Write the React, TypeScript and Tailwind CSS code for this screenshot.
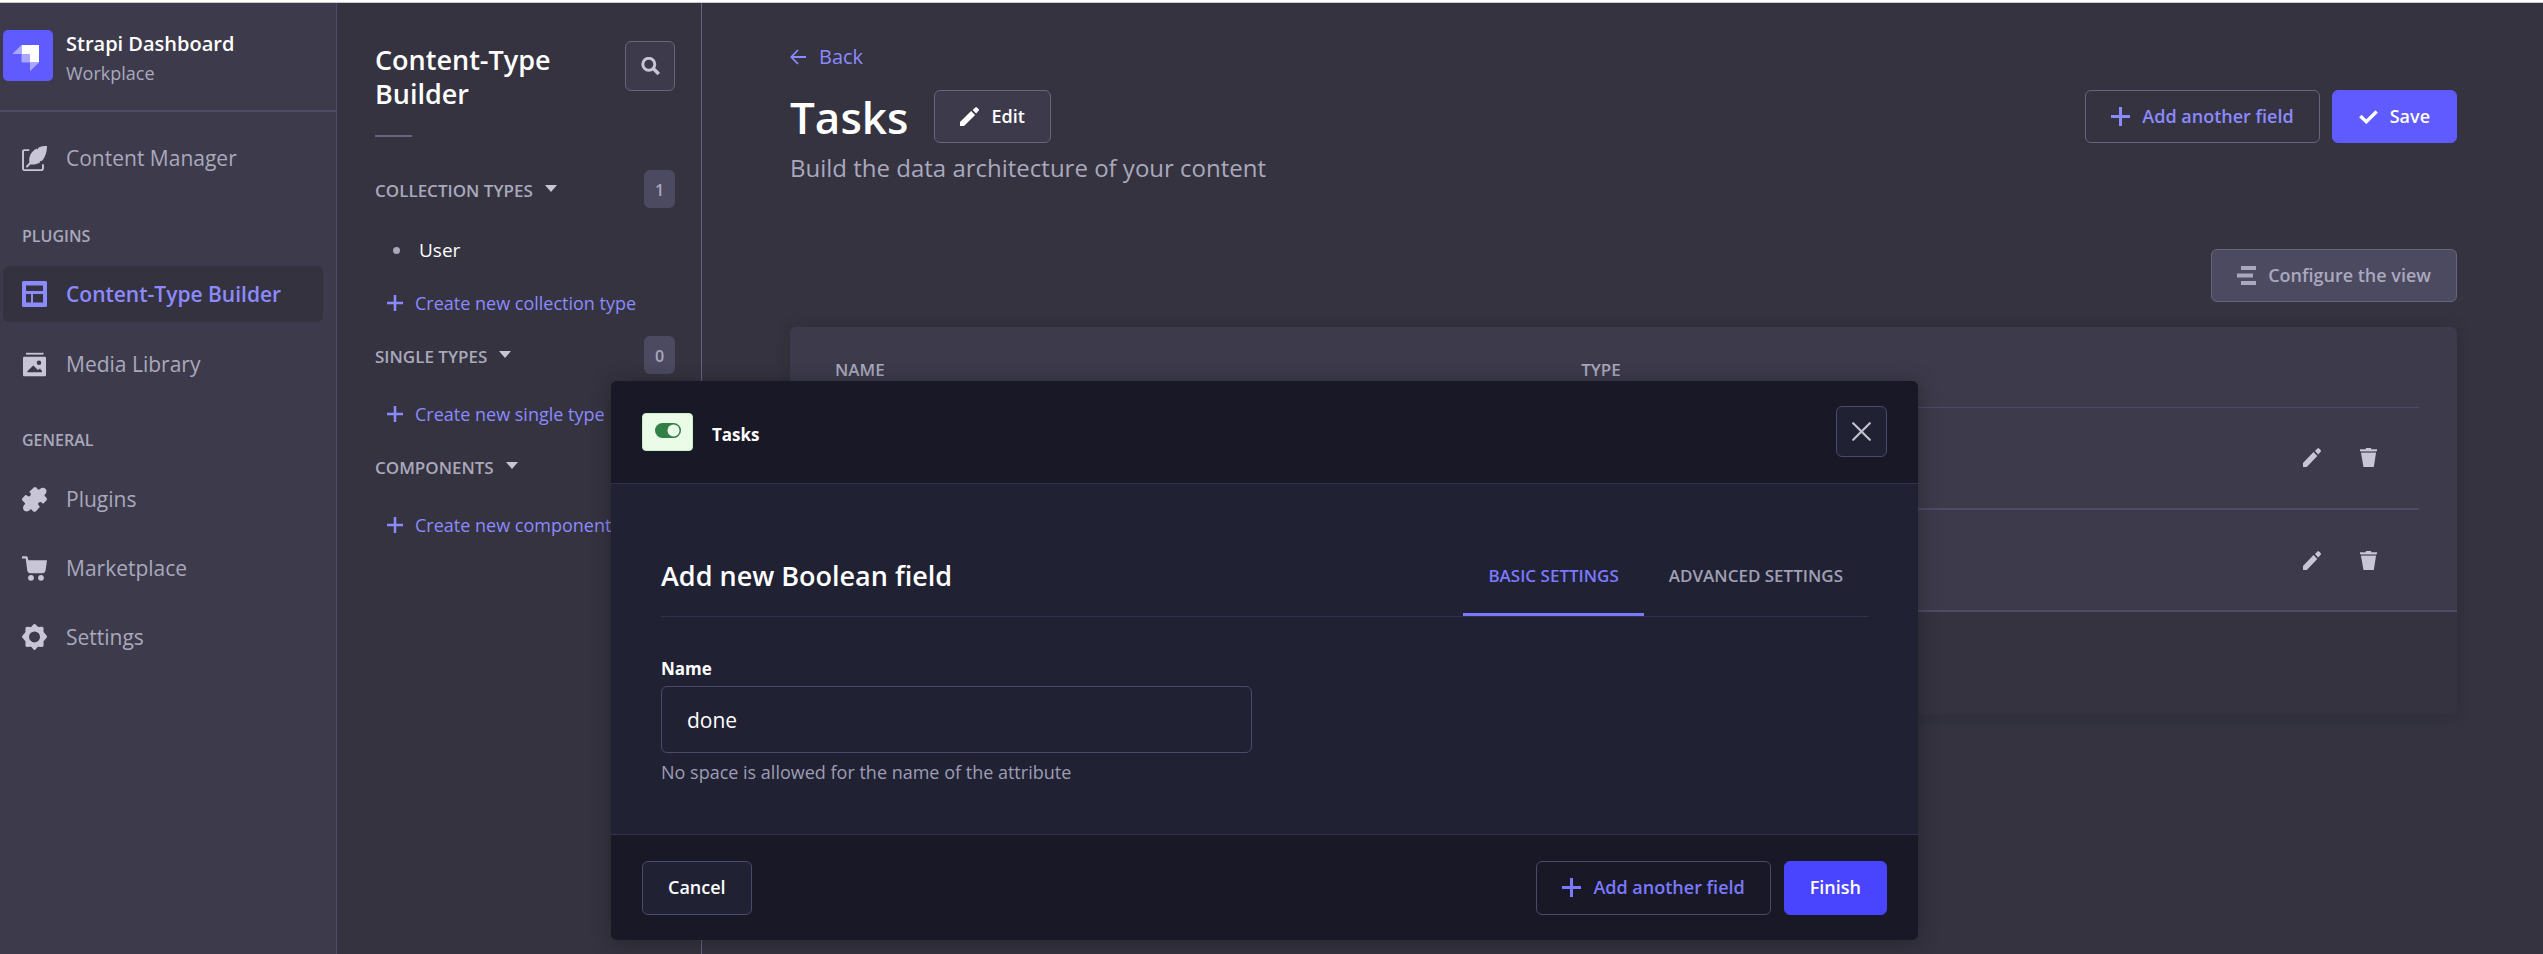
import { useState, type ReactNode } from "react";

type IconProps = { className?: string };

const StrapiLogo = () => (
  <svg viewBox="0 0 50 51" className="h-[51px] w-[50px] shrink-0" aria-hidden="true">
    <rect width="50" height="51" rx="5" fill="#5f5bff" />
    <path d="M18.500 15H36v17.500h-9V24h-8.500z" fill="#fff" />
    <path d="M18.500 24H27v8.500h-7.500a1 1 0 0 1-1-1z" fill="#a9a7ff" />
    <path d="M18.500 15v9h-8.200c-.4 0-.6-.5-.3-.8z" fill="#a9a7ff" />
    <path d="M27 40.200v-7.700h9l-8.200 8.100c-.3.300-.8.100-.8-.4z" fill="#a9a7ff" />
  </svg>
);

const FeatherIcon = ({ className }: IconProps) => (
  <svg viewBox="0 0 25 25" className={className} fill="currentColor" aria-hidden="true">
    <path d="M25 0c-3-.2-6 .3-8.300 1.500l-1.200 2-1-.9c-3 1.600-5.600 4.400-6.700 7.700-.7 2-.8 4.200-.4 6.200l-3.100 3.300c-.4.4-.4 1 0 1.400s1 .4 1.400 0l2.600-2.700c3.700.3 7.200-.3 10-2.300l-.7-1 2.500-.5C23 11.500 25 6 25 0z" />
    <path d="M7.300 4.100H2.500A1.500 1.500 0 0 0 1 5.600v17a1.500 1.500 0 0 0 1.500 1.500h17a1.500 1.500 0 0 0 1.500-1.500v-4.300" fill="none" stroke="currentColor" strokeWidth="1.900" />
  </svg>
);

const LayoutIcon = ({ className }: IconProps) => (
  <svg viewBox="0 0 25 26" className={className} fill="currentColor" fillRule="evenodd" aria-hidden="true">
    <path d="M1.500 0h22A1.500 1.500 0 0 1 25 1.500v23a1.500 1.500 0 0 1-1.500 1.500h-22A1.500 1.500 0 0 1 0 24.500v-23A1.500 1.500 0 0 1 1.500 0zM4 4.500v5.500h17V4.500zM4 13v8.500h5V13zM11 13v8.500h10V13z" />
  </svg>
);

const MediaIcon = ({ className }: IconProps) => (
  <svg viewBox="0 0 25 25" className={className} fill="currentColor" fillRule="evenodd" aria-hidden="true">
    <path d="M4 .8h17.500v1.800H4z" />
    <path d="M2.300 4.700h20.400c.7 0 1.300.6 1.300 1.300v17c0 .7-.6 1.300-1.300 1.300H2.300C1.600 24.300 1 23.700 1 23V6c0-.7.6-1.300 1.300-1.300zM17 8.500a2.200 2.200 0 1 0 0 4.500 2.200 2.200 0 0 0 0-4.500zM5.300 20.300h14.700v-1.200l-2-2.600-2 1.600-4.700-4.600-6 5.800z" />
  </svg>
);

const PuzzleIcon = ({ className }: IconProps) => (
  <svg viewBox="0 0 25 25" className={className} fill="currentColor" aria-hidden="true">
    <path d="M8.700 3.500 11.500.7c.8-.9 2-.9 2.800-.1L16 2.400c.5.500 1.100.3 1.600-.1 1.500-1.900 4.300-2.200 5.900-.6s1.200 4.300-.6 5.800c-.5.500-.6 1.100-.1 1.600l1.600 1.600c.8.800.8 2 0 2.800l-2.700 2.700c-.4.400-1 .4-1.400 0-.9-1.300-2.500-1.600-3.500-.6-1.100 1.100-.8 2.500.5 3.500.5.400.5 1 .1 1.400l-3.500 3.700c-.8.800-2 .8-2.800 0l-1.500-1.500c-.5-.5-1.100-.4-1.600.1-1.500 1.800-4.200 2.300-5.900.6s-1.200-4.300.6-5.900c.5-.5.600-1.100.1-1.600L.6 13.700c-.8-.8-.8-2 0-2.800l2.600-2.700c.4-.4 1-.4 1.400.1 1 1.300 2.600 1.500 3.600.5s.8-2.500-.5-3.500c-.4-.5-.4-1.300 1-1.800z" />
  </svg>
);

const CartIcon = ({ className }: IconProps) => (
  <svg viewBox="0 0 25 25" className={className} fill="currentColor" aria-hidden="true">
    <path d="M0 .3h4c1.100 0 1.700.6 1.900 1.600l.4 2.300H25l-1.400 10c-.3 1.900-1.400 3-3.300 3H8.500c-1.900 0-3-1.100-3.300-3L3.800 2.900c-.1-.4-.2-.5-.6-.5H0z" />
    <circle cx="9" cy="21.800" r="2.900" />
    <circle cx="19" cy="21.800" r="2.900" />
  </svg>
);

const CogIcon = ({ className }: IconProps) => (
  <svg viewBox="0 0 25 26" className={className} fill="currentColor" fillRule="evenodd" aria-hidden="true">
    <path d="M11.300.6c.7-.8 1.700-.8 2.400 0l1.900 2c.3.300.7.500 1.200.4l3-.3c1 0 1.800.7 1.800 1.700l-.1 3.100c0 .4.2.8.5 1.100l2.400 2.700c.8.900.8 1.900 0 2.700L22 16.800c-.3.300-.5.700-.5 1.200l.1 3.200c0 1-.8 1.800-1.800 1.700l-3-.2c-.5 0-.9.1-1.200.4l-1.900 2.200c-.7.900-1.700.9-2.400 0l-1.900-2.200c-.3-.3-.7-.4-1.200-.4l-3 .2c-1 .1-1.800-.7-1.800-1.700l.1-3.200c0-.5-.2-.9-.5-1.200L.6 14.100c-.8-.8-.8-1.800 0-2.700L3 8.700c.3-.3.500-.7.500-1.100l-.1-3.100c0-1 .8-1.700 1.800-1.700l3 .3c.5.100.9-.1 1.200-.4zM12.500 7.400a5.500 5.500 0 1 0 0 11 5.500 5.500 0 0 0 0-11z" />
  </svg>
);

const SearchIcon = () => (
  <svg viewBox="0 0 19 19" className="size-[19px]" fill="none" stroke="#c7c5d6" aria-hidden="true">
    <circle cx="7.800" cy="7.300" r="6" strokeWidth="3" />
    <path d="m12 11.300 5.800 5.700" strokeWidth="3.600" />
  </svg>
);

const CaretIcon = () => (
  <svg viewBox="0 0 12 7" className="mb-1.5 h-[7px] w-3" fill="#c7c5d6" aria-hidden="true">
    <path d="M0 0h12L6 7z" />
  </svg>
);

const PlusIcon = ({ className }: IconProps) => (
  <svg viewBox="0 0 19 19" className={className} fill="currentColor" aria-hidden="true">
    <path d="M8 0h3v8h8v3h-8v8H8v-8H0V8h8z" />
  </svg>
);

const ArrowLeftIcon = () => (
  <svg viewBox="0 0 16 16" className="size-4" fill="none" stroke="currentColor" strokeWidth="1.800" aria-hidden="true">
    <path d="M8 1 1.300 8 8 15M1.500 8H16" />
  </svg>
);

const PencilIcon = ({ className }: IconProps) => (
  <svg viewBox="0 0 19 19" className={className} fill="currentColor" preserveAspectRatio="none" aria-hidden="true">
    <path d="M0 15.100 11.100 4l4 4L4 19H0zM15.300.4a1.200 1.200 0 0 1 1.600 0l1.700 1.700c.5.500.5 1.200 0 1.700l-2.500 2.600-3.500-3.500z" />
  </svg>
);

const TrashIcon = () => (
  <svg viewBox="0 0 17 19" className="h-[19px] w-[17px]" fill="currentColor" aria-hidden="true">
    <path d="M0 1.300h5.800V.4c0-.2.200-.4.400-.4h4.600c.2 0 .4.200.4.400v.9H17v2H0zM1 5h15l-2.200 14H3.500z" />
    <path d="M1 3.300h15V5H1z" opacity=".4" />
  </svg>
);

const CheckIcon = () => (
  <svg viewBox="0 0 19 14" className="h-[14px] w-[19px]" fill="none" stroke="currentColor" strokeWidth="3.400" aria-hidden="true">
    <path d="m1.300 6 6 5.700L17.700 1.500" />
  </svg>
);

const ListIcon = () => (
  <svg viewBox="0 0 19 19" className="size-[19px]" fill="currentColor" aria-hidden="true">
    <path d="M4 0h15v4H4zM0 7.500h16v4H0zM4 15h15v4H4z" />
  </svg>
);

const CrossIcon = () => (
  <svg viewBox="0 0 19 19" className="size-[19px]" fill="none" stroke="#c0c0cf" strokeWidth="2.200" strokeLinecap="round" aria-hidden="true">
    <path d="m1.200 1.200 16.600 16.600M17.800 1.200 1.200 17.800" />
  </svg>
);

const BooleanBadge = () => (
  <span className="flex h-[38px] w-[51px] items-center justify-center rounded-[4px] border border-[#c6f0c2] bg-[#eafbe7]">
    <svg viewBox="0 0 26 15" className="mb-0.5 h-[15px] w-[26px]" aria-hidden="true">
      <rect width="26" height="15" rx="7.500" fill="#328048" />
      <circle cx="18.500" cy="7.500" r="6" fill="#eafbe7" />
    </svg>
  </span>
);

function NavItem({ icon, label, active }: { icon: ReactNode; label: string; active?: boolean }) {
  return (
    <a
      href="#"
      aria-current={active ? "page" : undefined}
      className={
        active
          ? "flex h-14 items-center gap-[19px] rounded-md bg-[#34323f] px-[19px] text-[21px] font-semibold text-[#8c8aff]"
          : "flex h-14 items-center gap-[19px] px-[19px] text-[21px] text-[#aaa8bd]"
      }
    >
      <span className={active ? "text-[#8c8aff]" : "text-[#c7c5d6]"}>{icon}</span>
      <span className="pt-0.5">{label}</span>
    </a>
  );
}

function NavHeading({ children }: { children: ReactNode }) {
  return <h2 className="px-[19px] text-[16px] leading-5 font-semibold text-[#aaa8bd] uppercase">{children}</h2>;
}

function TypeSection({ title, count, action, children }: { title: string; count?: number; action: string; children?: ReactNode }) {
  return (
    <section>
      <div className="flex h-[38px] items-center justify-between">
        <button className="flex items-center gap-3 pt-1 text-[17px] leading-5 font-semibold text-[#aaa8bd] uppercase">
          {title}
          <CaretIcon />
        </button>
        {count !== undefined && (
          <span className="flex h-[38px] w-[31px] items-center justify-center rounded-md bg-[#4c4a61] pt-0.5 text-[16px] font-semibold text-[#aaa8bd]">
            {count}
          </span>
        )}
      </div>
      {children}
      <a href="#" className="mt-[28px] flex h-6 items-center gap-3 pl-3 text-[18px] whitespace-nowrap text-[#8c8aff]">
        <PlusIcon className="size-4" />
        {action}
      </a>
    </section>
  );
}

const buttonBase = "flex items-center justify-center gap-3 rounded-md border text-[18px] font-semibold whitespace-nowrap";

function FieldRow({ last }: { last?: boolean }) {
  return (
    <tr className={last ? "h-[101px]" : "h-[102px] border-b-2 border-[#4e4b66]"}>
      <td />
      <td />
      <td>
        <div className="flex items-center justify-end gap-[39px] pr-[42px] text-[#c7c5d6]">
          <button aria-label="Edit field">
            <PencilIcon className="h-[19px] w-[18px]" />
          </button>
          <button aria-label="Delete field">
            <TrashIcon />
          </button>
        </div>
      </td>
    </tr>
  );
}

export default function App() {
  const [name, setName] = useState("done");
  const [tab, setTab] = useState<"basic" | "advanced">("basic");
  const tabClass = (on: boolean) =>
    on
      ? "border-b-3 border-[#7b79ff] px-[25px] pt-1 text-[17px] font-semibold text-[#7b79ff] uppercase"
      : "border-b-3 border-transparent px-[25px] pt-1 text-[17px] font-semibold text-[#a0a0b4] uppercase";

  return (
    <div className="relative flex min-h-screen flex-col overflow-hidden border-t-2 border-white bg-[#34333f] font-['Open_Sans',sans-serif]">
      <div className="flex grow border-t border-[#c9c9cf]">
        <nav className="w-[337px] shrink-0 border-r border-[#4e4b66] bg-[#3d3b4b]">
          <div className="flex h-[109px] items-center gap-[13px] border-b-2 border-[#4e4b66] pb-0.5 pl-[3px]">
            <StrapiLogo />
            <div className="pt-1">
              <p className="text-[20px] leading-[30px] font-semibold text-white">Strapi Dashboard</p>
              <p className="text-[18px] leading-7 text-[#aaa8bd]">Workplace</p>
            </div>
          </div>
          <div className="pt-[18px] pr-[13px] pl-[3px]">
            <NavItem icon={<FeatherIcon className="size-[25px]" />} label="Content Manager" />
            <div className="mt-10 mb-5">
              <NavHeading>Plugins</NavHeading>
            </div>
            <div className="flex flex-col gap-3.5">
              <NavItem active icon={<LayoutIcon className="h-[26px] w-[25px]" />} label="Content-Type Builder" />
              <NavItem icon={<MediaIcon className="size-[25px]" />} label="Media Library" />
            </div>
            <div className="mt-[38px] mb-[21px]">
              <NavHeading>General</NavHeading>
            </div>
            <div className="flex flex-col gap-[13px]">
              <NavItem icon={<PuzzleIcon className="size-[25px]" />} label="Plugins" />
              <NavItem icon={<CartIcon className="size-[25px]" />} label="Marketplace" />
              <NavItem icon={<CogIcon className="h-[26px] w-[25px]" />} label="Settings" />
            </div>
          </div>
        </nav>

        <aside className="w-[365px] shrink-0 border-r border-[#67647f] pt-[38px] pr-[26px] pl-[38px]">
          <div className="flex items-start justify-between">
            <h2 className="mt-0.5 w-[200px] text-[27px] leading-[34px] font-semibold text-white">Content-Type Builder</h2>
            <button aria-label="Search" className="flex size-[50px] items-center justify-center rounded-md border border-[#67647f] bg-[#3d3b4b]">
              <SearchIcon />
            </button>
          </div>
          <div className="mt-6 h-0.5 w-[37px] bg-[#67647f]" />
          <div className="mt-[33px] flex flex-col gap-[21px]">
            <TypeSection title="Collection types" count={1} action="Create new collection type">
              <a href="#" className="mt-[28px] -mb-px flex h-7 items-center gap-[19px] pl-[18px] text-[19px] font-medium text-white">
                <span className="size-[7px] rounded-full bg-[#aaa8bd]" />
                User
              </a>
            </TypeSection>
            <TypeSection title="Single types" count={0} action="Create new single type" />
            <TypeSection title="Components" action="Create new component" />
          </div>
        </aside>

        <main className="min-w-0 grow pt-10 pr-[86px] pl-[88px]">
          <a href="#" className="flex h-7 w-fit items-center gap-[13px] text-[20px] text-[#8c8aff]">
            <ArrowLeftIcon />
            Back
          </a>
          <div className="mt-[19px] flex items-center justify-between">
            <div className="flex items-center gap-[26px]">
              <h1 className="pt-0.5 text-[44px] leading-[51px] font-semibold text-white">Tasks</h1>
              <button className={`${buttonBase} h-[53px] border-[#67647f] bg-[#3d3b4b] px-[25px] text-white`}>
                <PencilIcon className="size-[19px]" />
                Edit
              </button>
            </div>
            <div className="flex gap-3">
              <button className={`${buttonBase} h-[53px] border-[#67647f] px-[25px] text-[#8c8aff]`}>
                <PlusIcon className="size-[19px]" />
                Add another field
              </button>
              <button className={`${buttonBase} h-[53px] border-[#5f5bff] bg-[#5f5bff] px-[26px] text-white`}>
                <CheckIcon />
                Save
              </button>
            </div>
          </div>
          <p className="mt-[9px] text-[24px] leading-8 text-[#aaa8bd]">Build the data architecture of your content</p>
          <div className="mt-[65px] flex justify-end">
            <button className={`${buttonBase} h-[53px] border-[#67647f] bg-[#4c4a61] px-[25px] text-[#aaa8bd]`}>
              <ListIcon />
              Configure the view
            </button>
          </div>

          <div className="mt-[25px] rounded-md shadow-[0_1px_16px_rgba(20,20,30,0.2)]">
            <div className="rounded-t-md border-b-2 border-[#4e4b66] bg-[#3d3b4b] px-[38px]">
              <table className="w-full table-fixed border-collapse">
                <thead>
                  <tr className="h-20 border-b border-[#4e4b66] text-left text-[17px] text-[#aaa8bd] uppercase">
                    <th className="w-[46.900%] pt-1.5 pl-[7px] font-semibold">Name</th>
                    <th className="pt-1.5 pl-[7px] font-semibold">Type</th>
                    <th className="w-[20%]" aria-label="Actions" />
                  </tr>
                </thead>
                <tbody>
                  <FieldRow />
                  <FieldRow last />
                </tbody>
              </table>
            </div>
            <div className="h-[102px] rounded-b-md bg-[#34333f]" />
          </div>
        </main>
      </div>

      <div className="absolute inset-0 flex items-start justify-center pt-[379px] pr-[14px]">
        <div
          role="dialog"
          aria-modal="true"
          aria-labelledby="modal-title"
          className="w-[1307px] overflow-hidden rounded-md bg-[#212134] shadow-[0_2px_20px_rgba(20,20,28,0.45)]"
        >
          <header className="flex h-[103px] items-center justify-between border-b border-[#32324d] bg-[#181826] px-[31px] pb-px">
            <div className="flex items-center gap-[19px]">
              <BooleanBadge />
              <span className="pt-1.5 text-[17px] font-bold text-white">Tasks</span>
            </div>
            <button aria-label="Close" className="flex size-[51px] items-center justify-center rounded-md border border-[#4a4a6a] bg-[#212134]">
              <CrossIcon />
            </button>
          </header>

          <div className="px-[50px] pt-[50px] pb-[49px]">
            <div className="flex h-[83px] justify-between border-b border-[#32324d]">
              <h2 id="modal-title" className="pt-[25px] text-[27px] leading-[34px] font-semibold text-white">
                Add new Boolean field
              </h2>
              <div role="tablist" className="flex">
                <button role="tab" aria-selected={tab === "basic"} onClick={() => setTab("basic")} className={tabClass(tab === "basic")}>
                  Basic settings
                </button>
                <button role="tab" aria-selected={tab === "advanced"} onClick={() => setTab("advanced")} className={tabClass(tab === "advanced")}>
                  Advanced settings
                </button>
              </div>
            </div>
            <div className="mt-10 flex w-[591px] flex-col">
              <label htmlFor="field-name" className="text-[17px] leading-6 font-bold text-white">
                Name
              </label>
              <input
                id="field-name"
                value={name}
                onChange={(event) => setName(event.target.value)}
                className="mt-[5px] h-[67px] rounded-md border border-[#4a4a6a] bg-[#212134] px-[25px] text-[21px] text-white outline-none"
              />
              <p className="mt-[7px] mb-px text-[18px] leading-6 text-[#9d9db3]">No space is allowed for the name of the attribute</p>
            </div>
          </div>

          <footer className="flex h-[106px] items-center justify-between border-t border-[#32324d] bg-[#181826] px-[31px]">
            <button className={`${buttonBase} h-[54px] border-[#4a4a6a] bg-[#212134] px-[25px] text-white`}>Cancel</button>
            <div className="flex gap-[13px]">
              <button className={`${buttonBase} h-[54px] border-[#4a4a6a] px-[25px] text-[#7b79ff]`}>
                <PlusIcon className="size-[19px]" />
                Add another field
              </button>
              <button className={`${buttonBase} h-[54px] border-[#4945ff] bg-[#4945ff] px-[25px] text-white`}>Finish</button>
            </div>
          </footer>
        </div>
      </div>
    </div>
  );
}
